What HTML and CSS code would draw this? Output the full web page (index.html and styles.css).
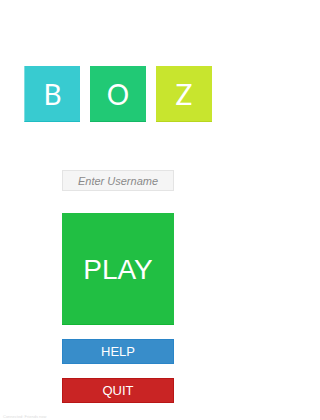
FILE: index.html
```html
<!DOCTYPE html>
<html>
<head>
<meta charset="utf-8">
<link rel="stylesheet" href="styles.css">
</head>
<body>
<main class="screen">
  <div class="logo">
    <div class="tile tile-b">B</div>
    <div class="tile tile-o">O</div>
    <div class="tile tile-z">Z</div>
  </div>
  <input class="username" type="text" placeholder="Enter Username">
  <button class="btn play">PLAY</button>
  <button class="btn help">HELP</button>
  <button class="btn quit">QUIT</button>
  <div class="status">Connected: Friends now</div>
</main>
</body>
</html>
```
FILE: styles.css
```css
html, body {
  margin: 0;
  padding: 0;
  background: #ffffff;
}
.screen {
  width: 236px;
  height: 420px;
  display: flex;
  flex-direction: column;
  align-items: center;
  font-family: "Liberation Sans", Arial, sans-serif;
  overflow: hidden;
}
.logo {
  margin-top: 66px;
  display: flex;
  gap: 10px;
}
.tile {
  width: 56px;
  height: 56px;
  box-sizing: border-box;
  display: flex;
  align-items: center;
  justify-content: center;
  color: #fff;
  font-family: Lato, "Open Sans", sans-serif;
  font-size: 28px;
}
.tile-b { background: #38cbd0; border-left: 1px solid #7fdde0; border-bottom: 1px solid #1fbcc2; }
.tile-o { background: #21c975; border-bottom: 1px solid #14b865; }
.tile-z { background: #c8e52e; border-bottom: 1px solid #b8d61f; }
.username {
  margin-top: 48px;
  width: 112px;
  height: 21px;
  box-sizing: border-box;
  border: 1px solid #e4e4e4;
  background: #f5f5f5;
  padding: 0;
  text-align: center;
  font-family: "Liberation Sans", Arial, sans-serif;
  font-size: 11px;
  font-style: italic;
  color: #555;
  outline: none;
}
.username::placeholder {
  color: #8a8a8a;
  font-style: italic;
}
.btn {
  width: 112px;
  box-sizing: border-box;
  border: none;
  padding: 0;
  color: #fff;
  font-family: "Liberation Sans", Arial, sans-serif;
  cursor: pointer;
}
.play {
  margin-top: 22px;
  height: 112px;
  background: #21bf43;
  border-bottom: 1px solid #14b535;
  font-size: 28px;
  padding-top: 2px;
}
.help {
  margin-top: 14px;
  height: 25px;
  background: #388dca;
  border: 1px solid #2a85c8;
  font-size: 13px;
}
.quit {
  margin-top: 14px;
  height: 25px;
  background: #c92424;
  border: 1px solid #b81616;
  font-size: 13px;
}
.status {
  align-self: flex-start;
  margin-top: 11px;
  margin-left: 3px;
  font-size: 4px;
  color: #dcdcdc;
  white-space: nowrap;
}
```
